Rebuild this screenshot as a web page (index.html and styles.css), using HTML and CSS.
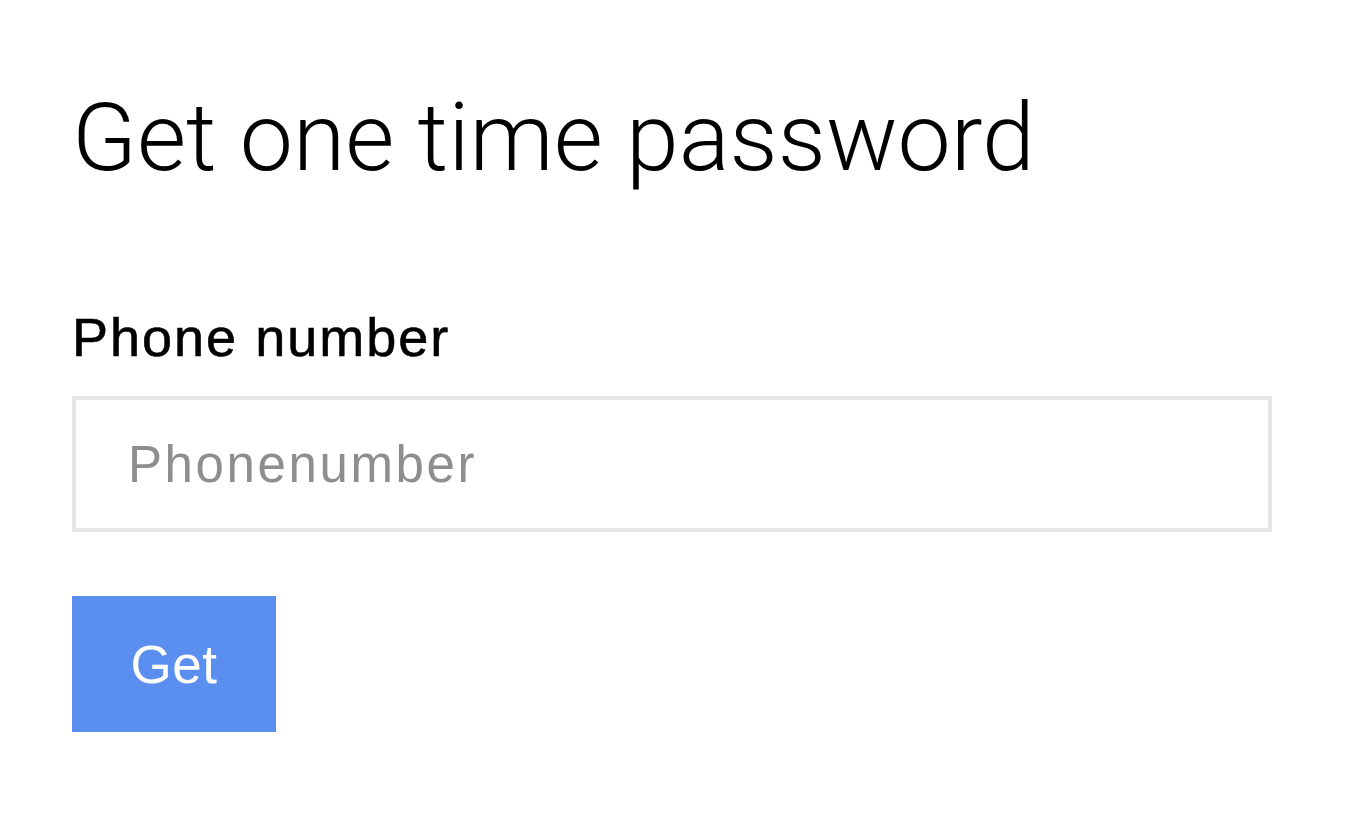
FILE: index.html
```html
<!DOCTYPE html>
<html lang="en">
<head>
<meta charset="utf-8">
<title>Get one time password</title>
<link rel="stylesheet" href="styles.css">
</head>
<body>
<main class="page">
  <h1 class="title">Get one time password</h1>
  <form class="form">
    <label class="label" for="phone">Phone number</label>
    <input class="input" id="phone" type="text" placeholder="Phonenumber">
    <button class="btn" type="button">Get</button>
  </form>
</main>
</body>
</html>
```

FILE: styles.css
```css
html, body {
  margin: 0;
  padding: 0;
  background: #ffffff;
}

.page {
  padding: 88px 72px 0 72px;
  font-family: "Liberation Sans", Arial, sans-serif;
  color: #000;
}

.title {
  margin: 0;
  font-family: Roboto, "Liberation Sans", sans-serif;
  font-weight: 300;
  font-size: 95px;
  line-height: 100px;
  letter-spacing: 0;
}

.form {
  display: flex;
  flex-direction: column;
  align-items: flex-start;
  margin-top: 119px;
}

.label {
  font-size: 54px;
  line-height: 60px;
  font-weight: 400;
  letter-spacing: 2px;
  -webkit-text-stroke: 0.6px #000;
}

.input {
  box-sizing: border-box;
  margin-top: 29px;
  width: 1200px;
  height: 136px;
  border: 4px solid #e6e6e6;
  border-radius: 0;
  padding: 0 0 0 52px;
  font-family: "Liberation Sans", Arial, sans-serif;
  font-size: 51px;
  letter-spacing: 2.6px;
  color: #333;
  outline: none;
  background: #fff;
}

.input::placeholder {
  color: #8e8e8e;
  opacity: 1;
}

.btn {
  box-sizing: border-box;
  margin-top: 64px;
  width: 204px;
  height: 136px;
  border: 0;
  border-radius: 0;
  background: #5a8ff0;
  color: #fff;
  font-family: "Liberation Sans", Arial, sans-serif;
  font-size: 53px;
  letter-spacing: 0.5px;
  padding: 0;
  cursor: pointer;
}
```
